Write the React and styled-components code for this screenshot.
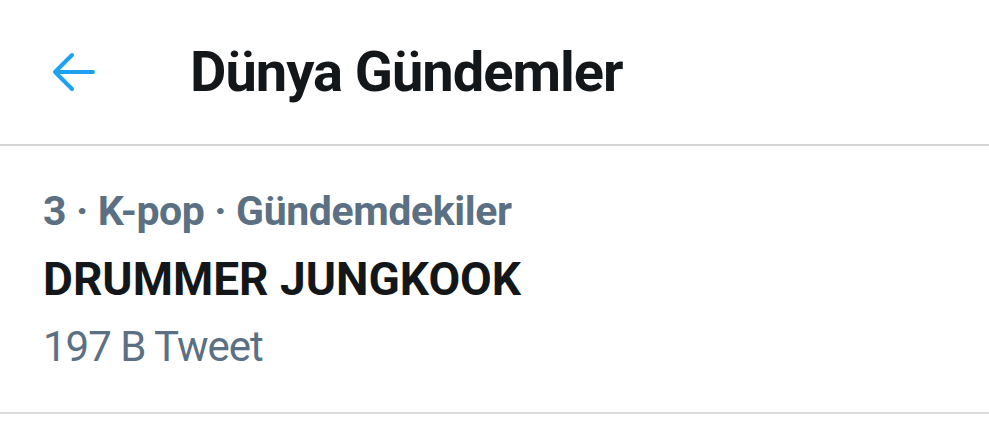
import React from 'react';
import styled, { createGlobalStyle } from 'styled-components';

const Global = createGlobalStyle`
  body {
    margin: 0;
    background: #ffffff;
    font-family: Roboto, "Liberation Sans", sans-serif;
  }
`;

const Page = styled.div`
  width: 989px;
  height: 428px;
  overflow: hidden;
  background: #fff;
`;

const Header = styled.div`
  height: 146px;
  display: flex;
  align-items: center;
  border-bottom: 2px solid #d6d6d6;
  box-sizing: border-box;
`;

const BackButton = styled.div`
  width: 190px;
  padding-left: 52px;
  box-sizing: border-box;
  display: flex;
  align-items: center;
  color: #1da1f2;
`;

const Title = styled.h1`
  margin: 0;
  font-size: 56px;
  font-weight: 700;
  color: #14171a;
  letter-spacing: -1px;
`;

const Trend = styled.div`
  padding: 0 43px;
  height: 268px;
  display: flex;
  flex-direction: column;
  justify-content: center;
  border-bottom: 2px solid #dcdcdc;
  box-sizing: border-box;
`;

const Line = styled.div`
  font-size: ${p => p.size}px;
  font-weight: ${p => (p.bold ? 700 : 400)};
  color: ${p => p.color};
  line-height: ${p => p.lh}px;
  letter-spacing: ${p => p.ls || 0}px;
`;

const App = () => (
  <Page>
    <Global />
    <Header>
      <BackButton>
        <svg width="44" height="40" viewBox="0 0 44 40" fill="none" stroke="currentColor" strokeWidth="4" strokeLinecap="round" strokeLinejoin="round">
          <path d="M41 20H5" />
          <path d="M20 3L3 20L20 37" />
        </svg>
      </BackButton>
      <Title>Dünya Gündemler</Title>
    </Header>
    <Trend>
      <Line size={41} bold color="#5b7083" lh={68} ls={-0.4}>3 · K-pop · Gündemdekiler</Line>
      <Line size={46} bold color="#14171a" lh={68}>DRUMMER JUNGKOOK</Line>
      <Line size={42} color="#5b7083" lh={68} ls={-1}>197 B Tweet</Line>
    </Trend>
  </Page>
);

export default App;
